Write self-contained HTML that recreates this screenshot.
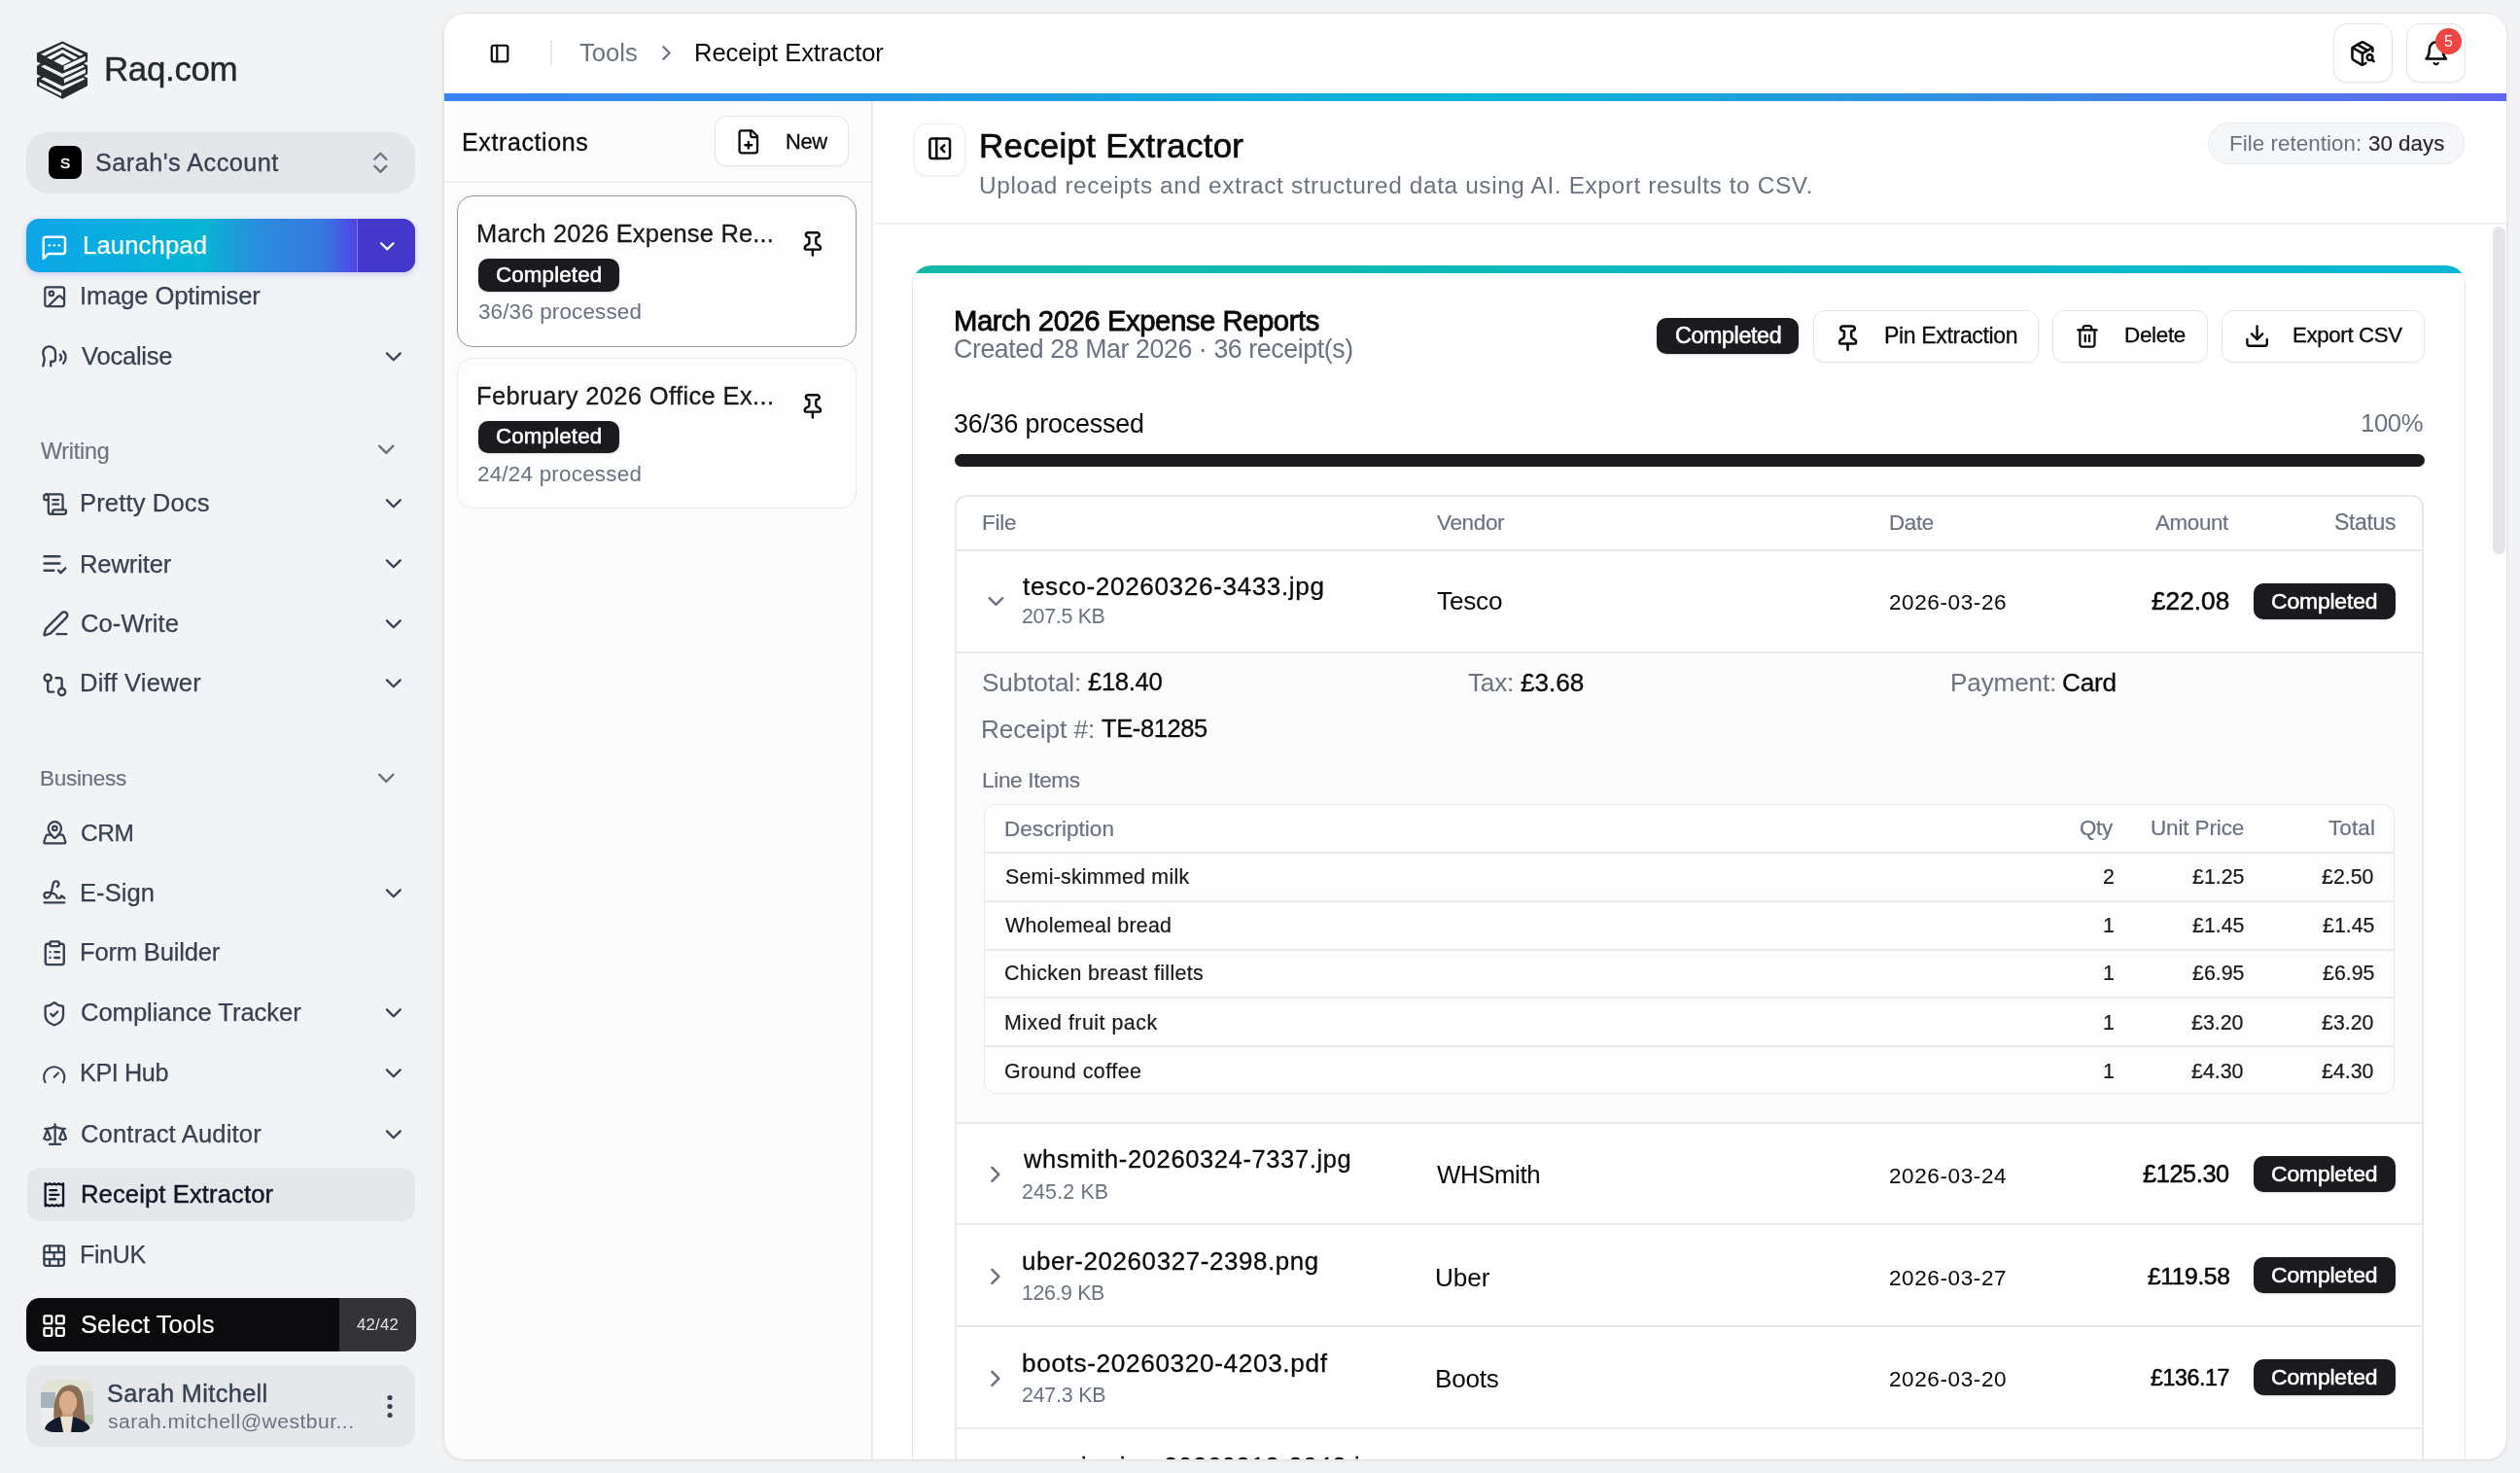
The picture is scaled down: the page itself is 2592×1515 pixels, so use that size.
<!DOCTYPE html><html><head><meta charset="utf-8"><style>
html,body{margin:0;padding:0;width:2592px;height:1515px;overflow:hidden;background:#f2f3f5;}
body{position:relative;font-family:"Liberation Sans",sans-serif;}
.t{position:absolute;white-space:nowrap;will-change:transform;}
</style></head><body>
<div style="position:absolute;left:27px;top:136px;width:400px;height:63px;background:#e4e6ea;border-radius:22px;box-sizing:border-box;z-index:1;"></div>
<div style="position:absolute;left:50px;top:150px;width:34px;height:34px;background:#000;border-radius:8px;box-sizing:border-box;z-index:3;"></div>
<div style="position:absolute;left:27px;top:225px;width:400px;height:55px;background:linear-gradient(90deg,#0ea5e9 0%,#06b6d4 45%,#2a8ddc 60%,#3778e0 76%,#4f46e5 85%,#4f46e5 100%);border-radius:13px;box-sizing:border-box;z-index:1;box-shadow:0 2px 6px rgba(79,70,229,0.25);"></div>
<div style="position:absolute;left:367px;top:225px;width:60px;height:55px;background:#4338ca;border-radius:0px;box-sizing:border-box;z-index:2;border-top-right-radius:13px;border-bottom-right-radius:13px;border-left:1px solid rgba(255,255,255,0.35);"></div>
<div style="position:absolute;left:27.8px;top:1201.3px;width:399.7px;height:54.5px;background:#e5e7eb;border-radius:14px;box-sizing:border-box;z-index:1;"></div>
<div style="position:absolute;left:27.3px;top:1334.6px;width:400.2px;height:55.80000000000018px;background:#0b0b0d;border-radius:14px;box-sizing:border-box;z-index:1;"></div>
<div style="position:absolute;left:349px;top:1334.6px;width:78.5px;height:55.80000000000018px;background:#333338;border-radius:0px;box-sizing:border-box;z-index:2;border-top-right-radius:14px;border-bottom-right-radius:14px;"></div>
<div style="position:absolute;left:27.3px;top:1404px;width:400.2px;height:83.5px;background:#e5e7eb;border-radius:16px;box-sizing:border-box;z-index:1;"></div>
<div style="position:absolute;left:456px;top:13px;width:2123px;height:1488.5px;background:#ffffff;border-radius:22px;box-sizing:border-box;z-index:0;box-shadow:0 1px 4px rgba(0,0,0,0.05);"></div>
<div style="position:absolute;left:565.5px;top:41px;width:2px;height:26px;background:#e5e7eb;z-index:4"></div>
<div style="position:absolute;left:2399.5px;top:24.3px;width:61.0px;height:60.7px;background:#fff;border:1.5px solid #e3e5e9;border-radius:14px;box-sizing:border-box;z-index:3;box-shadow:0 1px 2px rgba(0,0,0,0.05);"></div>
<div style="position:absolute;left:2475.4px;top:24.3px;width:60.59999999999991px;height:60.7px;background:#fff;border:1.5px solid #e3e5e9;border-radius:14px;box-sizing:border-box;z-index:3;box-shadow:0 1px 2px rgba(0,0,0,0.05);"></div>
<div style="position:absolute;left:2505px;top:29px;width:26.5px;height:26.5px;background:#ef4444;border-radius:14px;box-sizing:border-box;z-index:7;"></div>
<div style="position:absolute;left:456px;top:96px;width:2123px;height:7.5px;background:linear-gradient(90deg,#3b82f6 0%,#06b6d4 50%,#6366f1 100%);border-radius:0px;box-sizing:border-box;z-index:3;"></div>
<div style="position:absolute;left:457px;top:103.5px;width:439px;height:1397.0px;background:#fcfcfd;border-radius:0px;box-sizing:border-box;z-index:1;border-bottom-left-radius:20px;"></div>
<div style="position:absolute;left:895.5px;top:103.5px;width:2px;height:1397.0px;background:#e6e8ec;z-index:4"></div>
<div style="position:absolute;left:457px;top:186px;width:439px;height:2px;background:#eef0f2;z-index:4"></div>
<div style="position:absolute;left:735px;top:119px;width:138.29999999999995px;height:52.30000000000001px;background:#fff;border:1.5px solid #e3e5e9;border-radius:12px;box-sizing:border-box;z-index:3;box-shadow:0 1px 2px rgba(0,0,0,0.04);"></div>
<div style="position:absolute;left:470.2px;top:201.4px;width:411.00000000000006px;height:155.29999999999998px;background:#fdfdfd;border:1.8px solid #94969c;border-radius:16px;box-sizing:border-box;z-index:2;"></div>
<div style="position:absolute;left:492px;top:266.0px;width:145px;height:33.5px;background:#1b1b1f;border-radius:10px;box-sizing:border-box;z-index:3;box-shadow:0 1px 2px rgba(0,0,0,0.15);"></div>
<div style="position:absolute;left:470.2px;top:368.3px;width:411.00000000000006px;height:154.3px;background:#fdfdfd;border:1.5px solid #e9eaee;border-radius:16px;box-sizing:border-box;z-index:2;"></div>
<div style="position:absolute;left:492px;top:432.9px;width:145px;height:33.5px;background:#1b1b1f;border-radius:10px;box-sizing:border-box;z-index:3;box-shadow:0 1px 2px rgba(0,0,0,0.15);"></div>
<div style="position:absolute;left:939.5px;top:126.5px;width:53.0px;height:54.0px;background:#fff;border:1.5px solid #eceef1;border-radius:13px;box-sizing:border-box;z-index:3;box-shadow:0 1px 3px rgba(0,0,0,0.06);"></div>
<div style="position:absolute;left:2271.3px;top:126.4px;width:263.89999999999964px;height:42.599999999999994px;background:#f6f7f9;border:1.5px solid #e6e8ec;border-radius:22px;box-sizing:border-box;z-index:3;"></div>
<div style="position:absolute;left:896px;top:229px;width:1683px;height:2px;background:#f0f1f3;z-index:4"></div>
<div style="position:absolute;left:2564px;top:232.5px;width:12.5px;height:337.5px;background:#e3e5e9;border-radius:7px;box-sizing:border-box;z-index:4;"></div>
<div style="position:absolute;left:937.7px;top:272.8px;width:1598.5px;height:1300px;border-radius:20px;overflow:hidden;z-index:1"><div style="position:absolute;inset:0;border:1.5px solid #e3e5e9;border-radius:20px;background:#fff"></div><div style="position:absolute;left:0;top:0;right:0;height:7.8px;background:linear-gradient(90deg,#14b8a6,#06b6d4)"></div></div>
<div style="position:absolute;left:1704.3px;top:327px;width:146.20000000000005px;height:37px;background:#1b1b1f;border-radius:10px;box-sizing:border-box;z-index:3;box-shadow:0 1px 2px rgba(0,0,0,0.15);"></div>
<div style="position:absolute;left:1865px;top:318.5px;width:231.69999999999982px;height:54.5px;background:#fff;border:1.5px solid #e3e5e9;border-radius:12px;box-sizing:border-box;z-index:3;box-shadow:0 1px 2px rgba(0,0,0,0.04);"></div>
<div style="position:absolute;left:2111px;top:318.5px;width:159.5999999999999px;height:54.5px;background:#fff;border:1.5px solid #e3e5e9;border-radius:12px;box-sizing:border-box;z-index:3;box-shadow:0 1px 2px rgba(0,0,0,0.04);"></div>
<div style="position:absolute;left:2284.8px;top:318.5px;width:209.29999999999973px;height:54.5px;background:#fff;border:1.5px solid #e3e5e9;border-radius:12px;box-sizing:border-box;z-index:3;box-shadow:0 1px 2px rgba(0,0,0,0.04);"></div>
<div style="position:absolute;left:982px;top:467px;width:1512.1px;height:13px;background:#1b1b1f;border-radius:7px;box-sizing:border-box;z-index:3;"></div>
<div style="position:absolute;left:981.7px;top:509px;width:1511.3px;height:1051px;background:#fff;border:2px solid #e6e8ec;border-radius:12px;box-sizing:border-box;z-index:2;"></div>
<div style="position:absolute;left:982px;top:565px;width:1511px;height:2px;background:#e6e8ec;z-index:4"></div>
<div style="position:absolute;left:2318px;top:600px;width:146.19999999999982px;height:37px;background:#1b1b1f;border-radius:10px;box-sizing:border-box;z-index:3;box-shadow:0 1px 2px rgba(0,0,0,0.15);"></div>
<div style="position:absolute;left:982px;top:670px;width:1511px;height:2px;background:#e6e8ec;z-index:4"></div>
<div style="position:absolute;left:983.7px;top:672px;width:1507.3px;height:481.5999999999999px;background:#fbfbfb;border-radius:0px;box-sizing:border-box;z-index:3;"></div>
<div style="position:absolute;left:1011.6px;top:827px;width:1451.6px;height:297.70000000000005px;background:#fdfdfd;border:1.5px solid #e6e8ec;border-radius:12px;box-sizing:border-box;z-index:3;"></div>
<div style="position:absolute;left:1012px;top:875.5px;width:1450px;height:2px;background:#e6e8ec;z-index:4"></div>
<div style="position:absolute;left:1012px;top:925.5px;width:1450px;height:2px;background:#eaebef;z-index:4"></div>
<div style="position:absolute;left:1012px;top:976px;width:1450px;height:2px;background:#eaebef;z-index:4"></div>
<div style="position:absolute;left:1012px;top:1025.4px;width:1450px;height:2px;background:#eaebef;z-index:4"></div>
<div style="position:absolute;left:1012px;top:1075.2px;width:1450px;height:2px;background:#eaebef;z-index:4"></div>
<div style="position:absolute;left:982px;top:1153.6px;width:1511px;height:2px;background:#e6e8ec;z-index:4"></div>
<div style="position:absolute;left:2318px;top:1188.6px;width:146.19999999999982px;height:37.0px;background:#1b1b1f;border-radius:10px;box-sizing:border-box;z-index:3;box-shadow:0 1px 2px rgba(0,0,0,0.15);"></div>
<div style="position:absolute;left:982px;top:1258.4px;width:1511px;height:2px;background:#e6e8ec;z-index:4"></div>
<div style="position:absolute;left:2318px;top:1293.4px;width:146.19999999999982px;height:37.0px;background:#1b1b1f;border-radius:10px;box-sizing:border-box;z-index:3;box-shadow:0 1px 2px rgba(0,0,0,0.15);"></div>
<div style="position:absolute;left:982px;top:1362.9px;width:1511px;height:2px;background:#e6e8ec;z-index:4"></div>
<div style="position:absolute;left:2318px;top:1397.9px;width:146.19999999999982px;height:37.0px;background:#1b1b1f;border-radius:10px;box-sizing:border-box;z-index:3;box-shadow:0 1px 2px rgba(0,0,0,0.15);"></div>
<div style="position:absolute;left:982px;top:1467.7px;width:1511px;height:2px;background:#e6e8ec;z-index:4"></div>
<div style="position:absolute;left:456px;top:1501.5px;width:2136px;height:13.5px;background:#f2f3f5;border-radius:0px;box-sizing:border-box;z-index:20;"></div>
<div style="position:absolute;left:2579px;top:0px;width:13px;height:1515px;background:#f2f3f5;border-radius:0px;box-sizing:border-box;z-index:20;"></div>
<div style="position:absolute;left:455.5px;top:12.5px;width:2123.5px;height:1489.5px;background:transparent;border:1px solid #e2e4e8;border-radius:22px;box-sizing:border-box;z-index:21;box-shadow:0 1px 3px rgba(0,0,0,0.06);"></div>
<div class="t" id="t0" style="left:107.20px;top:53.52px;font-size:34.88px;line-height:34.88px;color:#25292c;font-weight:400;letter-spacing:-0.317px;z-index:5;-webkit-text-stroke:0.4px #25292c;">Raq.com</div>
<div class="t" id="t1" style="left:62.00px;top:160.10px;font-size:15.26px;line-height:15.26px;color:#fff;font-weight:400;letter-spacing:0.000px;z-index:6;-webkit-text-stroke:0.4px #fff;">S</div>
<div class="t" id="t2" style="left:98.15px;top:154.63px;font-size:25.29px;line-height:25.29px;color:#374151;font-weight:400;letter-spacing:0.459px;z-index:5;-webkit-text-stroke:0.3px #374151;">Sarah&#39;s Account</div>
<div class="t" id="t3" style="left:85.42px;top:240.18px;font-size:25.58px;line-height:25.58px;color:#fff;font-weight:400;letter-spacing:0.173px;z-index:5;-webkit-text-stroke:0.25px #fff;">Launchpad</div>
<div class="t" id="t4" style="left:82.42px;top:292.38px;font-size:25.58px;line-height:25.58px;color:#374151;font-weight:400;letter-spacing:-0.126px;z-index:5;-webkit-text-stroke:0.25px #374151;">Image Optimiser</div>
<div class="t" id="t5" style="left:84.42px;top:354.18px;font-size:25.58px;line-height:25.58px;color:#374151;font-weight:400;letter-spacing:-0.242px;z-index:5;-webkit-text-stroke:0.25px #374151;">Vocalise</div>
<div class="t" id="t6" style="left:42.10px;top:453.35px;font-size:23.26px;line-height:23.26px;color:#6b7280;font-weight:400;letter-spacing:-0.198px;z-index:5;-webkit-text-stroke:0.2px #6b7280;">Writing</div>
<div class="t" id="t7" style="left:82.42px;top:504.68px;font-size:25.58px;line-height:25.58px;color:#374151;font-weight:400;letter-spacing:0.135px;z-index:5;-webkit-text-stroke:0.25px #374151;">Pretty Docs</div>
<div class="t" id="t8" style="left:82.42px;top:567.58px;font-size:25.58px;line-height:25.58px;color:#374151;font-weight:400;letter-spacing:-0.136px;z-index:5;-webkit-text-stroke:0.25px #374151;">Rewriter</div>
<div class="t" id="t9" style="left:83.42px;top:629.38px;font-size:25.58px;line-height:25.58px;color:#374151;font-weight:400;letter-spacing:0.064px;z-index:5;-webkit-text-stroke:0.25px #374151;">Co-Write</div>
<div class="t" id="t10" style="left:82.42px;top:690.38px;font-size:25.58px;line-height:25.58px;color:#374151;font-weight:400;letter-spacing:0.204px;z-index:5;-webkit-text-stroke:0.25px #374151;">Diff Viewer</div>
<div class="t" id="t11" style="left:41.13px;top:789.87px;font-size:22.64px;line-height:22.64px;color:#6b7280;font-weight:400;letter-spacing:-0.349px;z-index:5;-webkit-text-stroke:0.2px #6b7280;">Business</div>
<div class="t" id="t12" style="left:83.47px;top:844.82px;font-size:24.47px;line-height:24.47px;color:#374151;font-weight:400;letter-spacing:-0.384px;z-index:5;-webkit-text-stroke:0.25px #374151;">CRM</div>
<div class="t" id="t13" style="left:82.42px;top:905.78px;font-size:25.58px;line-height:25.58px;color:#374151;font-weight:400;letter-spacing:0.041px;z-index:5;-webkit-text-stroke:0.25px #374151;">E-Sign</div>
<div class="t" id="t14" style="left:82.42px;top:966.88px;font-size:25.58px;line-height:25.58px;color:#374151;font-weight:400;letter-spacing:-0.194px;z-index:5;-webkit-text-stroke:0.25px #374151;">Form Builder</div>
<div class="t" id="t15" style="left:83.42px;top:1029.38px;font-size:25.58px;line-height:25.58px;color:#374151;font-weight:400;letter-spacing:-0.037px;z-index:5;-webkit-text-stroke:0.25px #374151;">Compliance Tracker</div>
<div class="t" id="t16" style="left:82.45px;top:1091.30px;font-size:25.20px;line-height:25.20px;color:#374151;font-weight:400;letter-spacing:-0.384px;z-index:5;-webkit-text-stroke:0.25px #374151;">KPI Hub</div>
<div class="t" id="t17" style="left:83.42px;top:1154.18px;font-size:25.58px;line-height:25.58px;color:#374151;font-weight:400;letter-spacing:0.150px;z-index:5;-webkit-text-stroke:0.25px #374151;">Contract Auditor</div>
<div class="t" id="t18" style="left:82.52px;top:1215.58px;font-size:25.58px;line-height:25.58px;color:#111827;font-weight:400;letter-spacing:0.119px;z-index:5;-webkit-text-stroke:0.45px #111827;">Receipt Extractor</div>
<div class="t" id="t19" style="left:82.46px;top:1278.00px;font-size:25.09px;line-height:25.09px;color:#374151;font-weight:400;letter-spacing:-0.384px;z-index:5;-webkit-text-stroke:0.25px #374151;">FinUK</div>
<div class="t" id="t20" style="left:83.40px;top:1349.58px;font-size:25.58px;line-height:25.58px;color:#fff;font-weight:400;letter-spacing:-0.002px;z-index:5;-webkit-text-stroke:0.2px #fff;">Select Tools</div>
<div class="t" id="t21" style="left:366.80px;top:1354.88px;font-size:16.72px;line-height:16.72px;color:#e4e4e7;font-weight:400;letter-spacing:0.273px;z-index:5;">42/42</div>
<div class="t" id="t22" style="left:110.20px;top:1420.63px;font-size:25.29px;line-height:25.29px;color:#374151;font-weight:400;letter-spacing:0.387px;z-index:5;-webkit-text-stroke:0.4px #374151;">Sarah Mitchell</div>
<div class="t" id="t23" style="left:111.00px;top:1450.69px;font-size:21.08px;line-height:21.08px;color:#6b7280;font-weight:400;letter-spacing:0.475px;z-index:5;">sarah.mitchell@westbur...</div>
<div class="t" id="t24" style="left:596.00px;top:42.38px;font-size:25.58px;line-height:25.58px;color:#6b7280;font-weight:400;letter-spacing:0.019px;z-index:5;">Tools</div>
<div class="t" id="t25" style="left:714.20px;top:42.38px;font-size:25.58px;line-height:25.58px;color:#0a0a0a;font-weight:400;letter-spacing:-0.085px;z-index:5;">Receipt Extractor</div>
<div class="t" id="t26" style="left:2514.00px;top:34.79px;font-size:15.99px;line-height:15.99px;color:#fff;font-weight:400;letter-spacing:0.000px;z-index:8;">5</div>
<div class="t" id="t27" style="left:475.43px;top:133.57px;font-size:25.01px;line-height:25.01px;color:#0a0a0a;font-weight:400;letter-spacing:0.618px;z-index:5;-webkit-text-stroke:0.3px #0a0a0a;">Extractions</div>
<div class="t" id="t28" style="left:808.21px;top:135.18px;font-size:21.92px;line-height:21.92px;color:#0a0a0a;font-weight:400;letter-spacing:-0.349px;z-index:5;-webkit-text-stroke:0.3px #0a0a0a;">New</div>
<div class="t" id="t29" style="left:489.75px;top:227.71px;font-size:25.44px;line-height:25.44px;color:#18181b;font-weight:400;letter-spacing:0.207px;z-index:5;-webkit-text-stroke:0.3px #18181b;">March 2026 Expense Re...</div>
<div class="t" id="t30" style="left:510.12px;top:271.54px;font-size:22.38px;line-height:22.38px;color:#fff;font-weight:400;letter-spacing:0.124px;z-index:5;-webkit-text-stroke:0.55px #fff;">Completed</div>
<div class="t" id="t31" style="left:491.60px;top:310.09px;font-size:22.38px;line-height:22.38px;color:#6b7280;font-weight:400;letter-spacing:0.172px;z-index:5;">36/36 processed</div>
<div class="t" id="t32" style="left:489.75px;top:394.61px;font-size:25.44px;line-height:25.44px;color:#18181b;font-weight:400;letter-spacing:0.380px;z-index:5;-webkit-text-stroke:0.3px #18181b;">February 2026 Office Ex...</div>
<div class="t" id="t33" style="left:510.12px;top:438.44px;font-size:22.38px;line-height:22.38px;color:#fff;font-weight:400;letter-spacing:0.124px;z-index:5;-webkit-text-stroke:0.55px #fff;">Completed</div>
<div class="t" id="t34" style="left:490.60px;top:476.99px;font-size:22.38px;line-height:22.38px;color:#6b7280;font-weight:400;letter-spacing:0.243px;z-index:5;">24/24 processed</div>
<div class="t" id="t35" style="left:1007.25px;top:132.52px;font-size:34.88px;line-height:34.88px;color:#0a0a0a;font-weight:400;letter-spacing:0.278px;z-index:5;-webkit-text-stroke:0.7px #0a0a0a;">Receipt Extractor</div>
<div class="t" id="t36" style="left:1006.98px;top:178.76px;font-size:24.43px;line-height:24.43px;color:#6b7280;font-weight:400;letter-spacing:0.600px;z-index:5;">Upload receipts and extract structured data using AI. Export results to CSV.</div>
<div class="t" id="t37" style="left:2292.70px;top:136.89px;font-size:22.38px;line-height:22.38px;color:#6b7280;font-weight:400;letter-spacing:0.047px;z-index:5;">File retention:</div>
<div class="t" id="t38" style="left:2436.07px;top:136.89px;font-size:22.38px;line-height:22.38px;color:#27272a;font-weight:400;letter-spacing:-0.005px;z-index:5;-webkit-text-stroke:0.15px #27272a;">30 days</div>
<div class="t" id="t39" style="left:980.50px;top:314.53px;font-size:29.32px;line-height:29.32px;color:#0a0a0a;font-weight:400;letter-spacing:-0.458px;z-index:5;-webkit-text-stroke:0.85px #0a0a0a;">March 2026 Expense Reports</div>
<div class="t" id="t40" style="left:981.01px;top:346.41px;font-size:26.73px;line-height:26.73px;color:#6b7280;font-weight:400;letter-spacing:-0.403px;z-index:5;">Created 28 Mar 2026 &middot; 36 receipt(s)</div>
<div class="t" id="t41" style="left:1722.58px;top:333.86px;font-size:23.24px;line-height:23.24px;color:#fff;font-weight:400;letter-spacing:-0.349px;z-index:5;-webkit-text-stroke:0.55px #fff;">Completed</div>
<div class="t" id="t42" style="left:1938.16px;top:333.83px;font-size:23.05px;line-height:23.05px;color:#0a0a0a;font-weight:400;letter-spacing:-0.349px;z-index:5;-webkit-text-stroke:0.3px #0a0a0a;">Pin Extraction</div>
<div class="t" id="t43" style="left:2184.88px;top:334.29px;font-size:22.50px;line-height:22.50px;color:#0a0a0a;font-weight:400;letter-spacing:-0.349px;z-index:5;-webkit-text-stroke:0.3px #0a0a0a;">Delete</div>
<div class="t" id="t44" style="left:2357.59px;top:334.48px;font-size:22.27px;line-height:22.27px;color:#0a0a0a;font-weight:400;letter-spacing:-0.349px;z-index:5;-webkit-text-stroke:0.3px #0a0a0a;">Export CSV</div>
<div class="t" id="t45" style="left:981.00px;top:423.48px;font-size:26.89px;line-height:26.89px;color:#0a0a0a;font-weight:400;letter-spacing:-0.198px;z-index:5;">36/36 processed</div>
<div class="t" id="t46" style="left:2428.29px;top:423.19px;font-size:25.69px;line-height:25.69px;color:#6b7280;font-weight:400;letter-spacing:-0.403px;z-index:5;">100%</div>
<div class="t" id="t47" style="left:1010.12px;top:526.44px;font-size:22.68px;line-height:22.68px;color:#6b7280;font-weight:400;letter-spacing:-0.349px;z-index:5;-webkit-text-stroke:0.2px #6b7280;">File</div>
<div class="t" id="t48" style="left:1477.70px;top:526.59px;font-size:22.50px;line-height:22.50px;color:#6b7280;font-weight:400;letter-spacing:-0.349px;z-index:5;-webkit-text-stroke:0.2px #6b7280;">Vendor</div>
<div class="t" id="t49" style="left:1943.04px;top:526.67px;font-size:22.40px;line-height:22.40px;color:#6b7280;font-weight:400;letter-spacing:-0.349px;z-index:5;-webkit-text-stroke:0.2px #6b7280;">Date</div>
<div class="t" id="t50" style="left:2217.30px;top:526.71px;font-size:22.36px;line-height:22.36px;color:#6b7280;font-weight:400;letter-spacing:-0.349px;z-index:5;-webkit-text-stroke:0.2px #6b7280;">Amount</div>
<div class="t" id="t51" style="left:2401.11px;top:526.12px;font-size:23.06px;line-height:23.06px;color:#6b7280;font-weight:400;letter-spacing:-0.349px;z-index:5;-webkit-text-stroke:0.2px #6b7280;">Status</div>
<div class="t" id="t52" style="left:1052.45px;top:589.94px;font-size:26.10px;line-height:26.10px;color:#0a0a0a;font-weight:400;letter-spacing:0.636px;z-index:5;-webkit-text-stroke:0.3px #0a0a0a;">tesco-20260326-3433.jpg</div>
<div class="t" id="t53" style="left:1051.30px;top:623.95px;font-size:21.37px;line-height:21.37px;color:#6b7280;font-weight:400;letter-spacing:-0.290px;z-index:5;">207.5 KB</div>
<div class="t" id="t54" style="left:1477.60px;top:604.89px;font-size:26.16px;line-height:26.16px;color:#0a0a0a;font-weight:400;letter-spacing:-0.195px;z-index:5;">Tesco</div>
<div class="t" id="t55" style="left:1942.90px;top:608.92px;font-size:22.58px;line-height:22.58px;color:#0a0a0a;font-weight:400;letter-spacing:0.563px;z-index:5;">2026-03-26</div>
<div class="t" id="t56" style="left:2213.28px;top:604.89px;font-size:26.16px;line-height:26.16px;color:#0a0a0a;font-weight:400;letter-spacing:0.039px;z-index:5;-webkit-text-stroke:0.55px #0a0a0a;">&pound;22.08</div>
<div class="t" id="t57" style="left:2336.28px;top:606.99px;font-size:22.97px;line-height:22.97px;color:#fff;font-weight:400;letter-spacing:-0.200px;z-index:5;-webkit-text-stroke:0.55px #fff;">Completed</div>
<div class="t" id="t58" style="left:1010.00px;top:688.79px;font-size:26.16px;line-height:26.16px;color:#6b7280;font-weight:400;letter-spacing:-0.122px;z-index:5;">Subtotal:</div>
<div class="t" id="t59" style="left:1119.15px;top:689.15px;font-size:25.74px;line-height:25.74px;color:#0a0a0a;font-weight:400;letter-spacing:-0.392px;z-index:5;-webkit-text-stroke:0.3px #0a0a0a;">&pound;18.40</div>
<div class="t" id="t60" style="left:1510.00px;top:688.79px;font-size:26.16px;line-height:26.16px;color:#6b7280;font-weight:400;letter-spacing:-0.234px;z-index:5;">Tax:</div>
<div class="t" id="t61" style="left:1564.15px;top:688.79px;font-size:26.16px;line-height:26.16px;color:#0a0a0a;font-weight:400;letter-spacing:-0.052px;z-index:5;-webkit-text-stroke:0.3px #0a0a0a;">&pound;3.68</div>
<div class="t" id="t62" style="left:2006.30px;top:688.79px;font-size:26.16px;line-height:26.16px;color:#6b7280;font-weight:400;letter-spacing:-0.174px;z-index:5;">Payment:</div>
<div class="t" id="t63" style="left:2120.65px;top:688.79px;font-size:26.16px;line-height:26.16px;color:#0a0a0a;font-weight:400;letter-spacing:-0.215px;z-index:5;-webkit-text-stroke:0.3px #0a0a0a;">Card</div>
<div class="t" id="t64" style="left:1009.00px;top:736.59px;font-size:26.16px;line-height:26.16px;color:#6b7280;font-weight:400;letter-spacing:-0.056px;z-index:5;">Receipt #:</div>
<div class="t" id="t65" style="left:1133.15px;top:737.15px;font-size:25.51px;line-height:25.51px;color:#0a0a0a;font-weight:400;letter-spacing:-0.392px;z-index:5;-webkit-text-stroke:0.3px #0a0a0a;">TE-81285</div>
<div class="t" id="t66" style="left:1010.13px;top:791.69px;font-size:22.62px;line-height:22.62px;color:#6b7280;font-weight:400;letter-spacing:-0.349px;z-index:5;-webkit-text-stroke:0.2px #6b7280;">Line Items</div>
<div class="t" id="t67" style="left:1032.50px;top:841.96px;font-size:22.53px;line-height:22.53px;color:#6b7280;font-weight:400;letter-spacing:0.030px;z-index:5;-webkit-text-stroke:0.2px #6b7280;">Description</div>
<div class="t" id="t68" style="left:2139.41px;top:841.32px;font-size:22.34px;line-height:22.34px;color:#6b7280;font-weight:400;letter-spacing:-0.338px;z-index:5;-webkit-text-stroke:0.2px #6b7280;">Qty</div>
<div class="t" id="t69" style="left:2212.10px;top:841.16px;font-size:22.53px;line-height:22.53px;color:#6b7280;font-weight:400;letter-spacing:-0.141px;z-index:5;-webkit-text-stroke:0.2px #6b7280;">Unit Price</div>
<div class="t" id="t70" style="left:2394.60px;top:841.16px;font-size:22.53px;line-height:22.53px;color:#6b7280;font-weight:400;letter-spacing:0.111px;z-index:5;-webkit-text-stroke:0.2px #6b7280;">Total</div>
<div class="t" id="t71" style="left:1033.50px;top:892.25px;font-size:21.37px;line-height:21.37px;color:#18181b;font-weight:400;letter-spacing:0.247px;z-index:5;-webkit-text-stroke:0.2px #18181b;">Semi-skimmed milk</div>
<div class="t" id="t72" style="left:2163.20px;top:892.25px;font-size:21.37px;line-height:21.37px;color:#18181b;font-weight:400;letter-spacing:0.000px;z-index:5;-webkit-text-stroke:0.2px #18181b;">2</div>
<div class="t" id="t73" style="left:2255.33px;top:892.25px;font-size:21.37px;line-height:21.37px;color:#18181b;font-weight:400;letter-spacing:0.000px;z-index:5;-webkit-text-stroke:0.2px #18181b;">&pound;1.25</div>
<div class="t" id="t74" style="left:2388.03px;top:892.25px;font-size:21.37px;line-height:21.37px;color:#18181b;font-weight:400;letter-spacing:0.000px;z-index:5;-webkit-text-stroke:0.2px #18181b;">&pound;2.50</div>
<div class="t" id="t75" style="left:1033.50px;top:941.95px;font-size:21.37px;line-height:21.37px;color:#18181b;font-weight:400;letter-spacing:0.255px;z-index:5;-webkit-text-stroke:0.2px #18181b;">Wholemeal bread</div>
<div class="t" id="t76" style="left:2163.20px;top:941.95px;font-size:21.37px;line-height:21.37px;color:#18181b;font-weight:400;letter-spacing:0.000px;z-index:5;-webkit-text-stroke:0.2px #18181b;">1</div>
<div class="t" id="t77" style="left:2255.33px;top:941.95px;font-size:21.37px;line-height:21.37px;color:#18181b;font-weight:400;letter-spacing:0.000px;z-index:5;-webkit-text-stroke:0.2px #18181b;">&pound;1.45</div>
<div class="t" id="t78" style="left:2389.03px;top:941.95px;font-size:21.37px;line-height:21.37px;color:#18181b;font-weight:400;letter-spacing:0.000px;z-index:5;-webkit-text-stroke:0.2px #18181b;">&pound;1.45</div>
<div class="t" id="t79" style="left:1032.50px;top:991.45px;font-size:21.37px;line-height:21.37px;color:#18181b;font-weight:400;letter-spacing:0.367px;z-index:5;-webkit-text-stroke:0.2px #18181b;">Chicken breast fillets</div>
<div class="t" id="t80" style="left:2163.20px;top:991.45px;font-size:21.37px;line-height:21.37px;color:#18181b;font-weight:400;letter-spacing:0.000px;z-index:5;-webkit-text-stroke:0.2px #18181b;">1</div>
<div class="t" id="t81" style="left:2255.33px;top:991.45px;font-size:21.37px;line-height:21.37px;color:#18181b;font-weight:400;letter-spacing:0.000px;z-index:5;-webkit-text-stroke:0.2px #18181b;">&pound;6.95</div>
<div class="t" id="t82" style="left:2389.03px;top:991.45px;font-size:21.37px;line-height:21.37px;color:#18181b;font-weight:400;letter-spacing:0.000px;z-index:5;-webkit-text-stroke:0.2px #18181b;">&pound;6.95</div>
<div class="t" id="t83" style="left:1032.50px;top:1041.95px;font-size:21.37px;line-height:21.37px;color:#18181b;font-weight:400;letter-spacing:0.501px;z-index:5;-webkit-text-stroke:0.2px #18181b;">Mixed fruit pack</div>
<div class="t" id="t84" style="left:2163.20px;top:1041.95px;font-size:21.37px;line-height:21.37px;color:#18181b;font-weight:400;letter-spacing:0.000px;z-index:5;-webkit-text-stroke:0.2px #18181b;">1</div>
<div class="t" id="t85" style="left:2254.33px;top:1041.95px;font-size:21.37px;line-height:21.37px;color:#18181b;font-weight:400;letter-spacing:0.000px;z-index:5;-webkit-text-stroke:0.2px #18181b;">&pound;3.20</div>
<div class="t" id="t86" style="left:2388.03px;top:1041.95px;font-size:21.37px;line-height:21.37px;color:#18181b;font-weight:400;letter-spacing:0.000px;z-index:5;-webkit-text-stroke:0.2px #18181b;">&pound;3.20</div>
<div class="t" id="t87" style="left:1032.50px;top:1092.35px;font-size:21.37px;line-height:21.37px;color:#18181b;font-weight:400;letter-spacing:0.500px;z-index:5;-webkit-text-stroke:0.2px #18181b;">Ground coffee</div>
<div class="t" id="t88" style="left:2163.20px;top:1092.35px;font-size:21.37px;line-height:21.37px;color:#18181b;font-weight:400;letter-spacing:0.000px;z-index:5;-webkit-text-stroke:0.2px #18181b;">1</div>
<div class="t" id="t89" style="left:2254.33px;top:1092.35px;font-size:21.37px;line-height:21.37px;color:#18181b;font-weight:400;letter-spacing:0.000px;z-index:5;-webkit-text-stroke:0.2px #18181b;">&pound;4.30</div>
<div class="t" id="t90" style="left:2388.03px;top:1092.35px;font-size:21.37px;line-height:21.37px;color:#18181b;font-weight:400;letter-spacing:0.000px;z-index:5;-webkit-text-stroke:0.2px #18181b;">&pound;4.30</div>
<div class="t" id="t91" style="left:1053.45px;top:1180.08px;font-size:25.47px;line-height:25.47px;color:#0a0a0a;font-weight:400;letter-spacing:0.636px;z-index:5;-webkit-text-stroke:0.3px #0a0a0a;">whsmith-20260324-7337.jpg</div>
<div class="t" id="t92" style="left:1051.30px;top:1215.55px;font-size:21.37px;line-height:21.37px;color:#6b7280;font-weight:400;letter-spacing:0.167px;z-index:5;">245.2 KB</div>
<div class="t" id="t93" style="left:1477.60px;top:1196.40px;font-size:25.79px;line-height:25.79px;color:#0a0a0a;font-weight:400;letter-spacing:-0.392px;z-index:5;">WHSmith</div>
<div class="t" id="t94" style="left:1942.90px;top:1198.72px;font-size:22.58px;line-height:22.58px;color:#0a0a0a;font-weight:400;letter-spacing:0.563px;z-index:5;">2026-03-24</div>
<div class="t" id="t95" style="left:2204.28px;top:1195.40px;font-size:25.33px;line-height:25.33px;color:#0a0a0a;font-weight:400;letter-spacing:-0.392px;z-index:5;-webkit-text-stroke:0.55px #0a0a0a;">&pound;125.30</div>
<div class="t" id="t96" style="left:2336.28px;top:1195.59px;font-size:22.97px;line-height:22.97px;color:#fff;font-weight:400;letter-spacing:-0.200px;z-index:5;-webkit-text-stroke:0.55px #fff;">Completed</div>
<div class="t" id="t97" style="left:1051.43px;top:1284.55px;font-size:25.86px;line-height:25.86px;color:#0a0a0a;font-weight:400;letter-spacing:0.636px;z-index:5;-webkit-text-stroke:0.3px #0a0a0a;">uber-20260327-2398.png</div>
<div class="t" id="t98" style="left:1051.30px;top:1320.43px;font-size:21.27px;line-height:21.27px;color:#6b7280;font-weight:400;letter-spacing:-0.320px;z-index:5;">126.9 KB</div>
<div class="t" id="t99" style="left:1475.60px;top:1300.89px;font-size:26.16px;line-height:26.16px;color:#0a0a0a;font-weight:400;letter-spacing:-0.094px;z-index:5;">Uber</div>
<div class="t" id="t100" style="left:1942.90px;top:1303.52px;font-size:22.58px;line-height:22.58px;color:#0a0a0a;font-weight:400;letter-spacing:0.563px;z-index:5;">2026-03-27</div>
<div class="t" id="t101" style="left:2208.57px;top:1300.78px;font-size:24.64px;line-height:24.64px;color:#0a0a0a;font-weight:400;letter-spacing:-0.392px;z-index:5;-webkit-text-stroke:0.55px #0a0a0a;">&pound;119.58</div>
<div class="t" id="t102" style="left:2336.28px;top:1300.39px;font-size:22.97px;line-height:22.97px;color:#fff;font-weight:400;letter-spacing:-0.200px;z-index:5;-webkit-text-stroke:0.55px #fff;">Completed</div>
<div class="t" id="t103" style="left:1051.42px;top:1388.77px;font-size:26.19px;line-height:26.19px;color:#0a0a0a;font-weight:400;letter-spacing:0.636px;z-index:5;-webkit-text-stroke:0.3px #0a0a0a;">boots-20260320-4203.pdf</div>
<div class="t" id="t104" style="left:1051.30px;top:1424.85px;font-size:21.37px;line-height:21.37px;color:#6b7280;font-weight:400;letter-spacing:-0.204px;z-index:5;">247.3 KB</div>
<div class="t" id="t105" style="left:1475.60px;top:1405.39px;font-size:26.16px;line-height:26.16px;color:#0a0a0a;font-weight:400;letter-spacing:-0.252px;z-index:5;">Boots</div>
<div class="t" id="t106" style="left:1942.90px;top:1408.02px;font-size:22.58px;line-height:22.58px;color:#0a0a0a;font-weight:400;letter-spacing:0.563px;z-index:5;">2026-03-20</div>
<div class="t" id="t107" style="left:2211.88px;top:1406.48px;font-size:23.21px;line-height:23.21px;color:#0a0a0a;font-weight:400;letter-spacing:-0.392px;z-index:5;-webkit-text-stroke:0.55px #0a0a0a;">&pound;136.17</div>
<div class="t" id="t108" style="left:2336.28px;top:1404.89px;font-size:22.97px;line-height:22.97px;color:#fff;font-weight:400;letter-spacing:-0.200px;z-index:5;-webkit-text-stroke:0.55px #fff;">Completed</div>
<div class="t" id="t109" style="left:1051.45px;top:1495.51px;font-size:25.44px;line-height:25.44px;color:#0a0a0a;font-weight:400;letter-spacing:0.750px;z-index:5;-webkit-text-stroke:0.3px #0a0a0a;">premier-inn-20260318-3942.jpg</div>
<svg style="position:absolute;left:34px;top:38px;width:60px;height:68px;z-index:6" viewBox="0 0 1300 1473">
<polygon fill="#272b2e" points="655,95 1215,360 1215,545 1130,590 1215,640 1215,825 1130,870 1215,920 1215,1090 655,1380 85,1090 85,920 170,875 85,830 85,645 170,595 85,545 85,360"/>
<g fill="#f2f3f5">
<polygon points="175,385 655,145 1125,385 1045,425 655,230 255,425"/>
<polygon points="305,460 655,280 1000,460 910,505 655,360 400,505"/>
<polygon points="655,430 850,535 655,635 460,535"/>
<polygon points="685,645 1165,430 1165,515 685,745"/>
<polygon points="175,660 255,625 655,820 1120,625 1150,665 655,905"/>
<polygon points="690,935 1170,715 1170,800 690,1030"/>
<polygon points="175,935 255,900 655,1100 1120,905 1150,940 655,1185"/>
<polygon points="135,1000 630,1245 630,1320 135,1070"/>
</g></svg>
<svg style="position:absolute;left:376.83px;top:152.92px;width:28.67px;height:28.67px;z-index:6" viewBox="0 0 24 24" fill="none" stroke="#6b7280" stroke-width="2" stroke-linecap="round" stroke-linejoin="round"><path d="m7 15 5 5 5-5"/><path d="m7 9 5-5 5 5"/></svg>
<svg style="position:absolute;left:40.52px;top:239.53px;width:29.70px;height:29.70px;z-index:6" viewBox="0 0 24 24" fill="none" stroke="#fff" stroke-width="2" stroke-linecap="round" stroke-linejoin="round"><path d="M21 15a2 2 0 0 1-2 2H7l-4 4V5a2 2 0 0 1 2-2h14a2 2 0 0 1 2 2z"/><path d="M8 10h.01"/><path d="M12 10h.01"/><path d="M16 10h.01"/></svg>
<svg style="position:absolute;left:386.47px;top:241.39px;width:24.64px;height:24.64px;z-index:6" viewBox="0 0 24 24" fill="none" stroke="#fff" stroke-width="2.2" stroke-linecap="round" stroke-linejoin="round"><path d="m6 9 6 6 6-6"/></svg>
<svg style="position:absolute;left:42.80px;top:291.80px;width:26.40px;height:26.40px;z-index:6" viewBox="0 0 24 24" fill="none" stroke="#374151" stroke-width="2" stroke-linecap="round" stroke-linejoin="round"><rect width="18" height="18" x="3" y="3" rx="2" ry="2"/><circle cx="9" cy="9" r="2"/><path d="m21 15-3.086-3.086a2 2 0 0 0-2.828 0L6 21"/></svg>
<svg style="position:absolute;left:42.23px;top:353.37px;width:28.00px;height:28.00px;z-index:6" viewBox="0 0 24 24" fill="none" stroke="#374151" stroke-width="2" stroke-linecap="round" stroke-linejoin="round"><path d="M8.8 20v-4.1l1.9.2a2.3 2.3 0 0 0 2.164-2.1V8.3A5.37 5.37 0 0 0 2 8.25c0 2.8.656 3.054 1 4.55a5.77 5.77 0 0 1 .029 2.758L2 20"/><path d="M19.8 17.8a7.5 7.5 0 0 0 .003-10.603"/><path d="M17 15a3.5 3.5 0 0 0-.025-4.975"/></svg>
<svg style="position:absolute;left:390.64px;top:353.09px;width:27.64px;height:27.64px;z-index:6" viewBox="0 0 24 24" fill="none" stroke="#374151" stroke-width="2" stroke-linecap="round" stroke-linejoin="round"><path d="m6 9 6 6 6-6"/></svg>
<svg style="position:absolute;left:382.85px;top:448.49px;width:28.54px;height:28.54px;z-index:6" viewBox="0 0 24 24" fill="none" stroke="#6b7280" stroke-width="2" stroke-linecap="round" stroke-linejoin="round"><path d="m6 9 6 6 6-6"/></svg>
<svg style="position:absolute;left:42.86px;top:504.73px;width:27.27px;height:27.27px;z-index:6" viewBox="0 0 24 24" fill="none" stroke="#374151" stroke-width="2" stroke-linecap="round" stroke-linejoin="round"><path d="M15 12h-5"/><path d="M15 8h-5"/><path d="M19 17V5a2 2 0 0 0-2-2H4"/><path d="M8 21h12a2 2 0 0 0 2-2v-1a1 1 0 0 0-1-1H11a1 1 0 0 0-1 1v1a2 2 0 1 1-4 0V5a2 2 0 1 0-4 0v2a1 1 0 0 0 1 1h3"/></svg>
<svg style="position:absolute;left:390.64px;top:503.59px;width:27.64px;height:27.64px;z-index:6" viewBox="0 0 24 24" fill="none" stroke="#374151" stroke-width="2" stroke-linecap="round" stroke-linejoin="round"><path d="m6 9 6 6 6-6"/></svg>
<svg style="position:absolute;left:41.59px;top:564.97px;width:28.95px;height:28.95px;z-index:6" viewBox="0 0 24 24" fill="none" stroke="#374151" stroke-width="2" stroke-linecap="round" stroke-linejoin="round"><path d="M11 18H3"/><path d="m15 18 2 2 4-4"/><path d="M16 12H3"/><path d="M16 6H3"/></svg>
<svg style="position:absolute;left:390.64px;top:566.49px;width:27.64px;height:27.64px;z-index:6" viewBox="0 0 24 24" fill="none" stroke="#374151" stroke-width="2" stroke-linecap="round" stroke-linejoin="round"><path d="m6 9 6 6 6-6"/></svg>
<svg style="position:absolute;left:42.80px;top:626.85px;width:28.72px;height:28.72px;z-index:6" viewBox="0 0 24 24" fill="none" stroke="#374151" stroke-width="2" stroke-linecap="round" stroke-linejoin="round"><path d="M13 21h8"/><path d="M21.174 6.812a1 1 0 0 0-3.986-3.987L3.842 16.174a2 2 0 0 0-.5.83l-1.321 4.352a.5.5 0 0 0 .623.622l4.353-1.32a2 2 0 0 0 .83-.497z"/></svg>
<svg style="position:absolute;left:390.64px;top:628.29px;width:27.64px;height:27.64px;z-index:6" viewBox="0 0 24 24" fill="none" stroke="#374151" stroke-width="2" stroke-linecap="round" stroke-linejoin="round"><path d="m6 9 6 6 6-6"/></svg>
<svg style="position:absolute;left:41.60px;top:689.60px;width:28.80px;height:28.80px;z-index:6" viewBox="0 0 24 24" fill="none" stroke="#374151" stroke-width="2" stroke-linecap="round" stroke-linejoin="round"><circle cx="18" cy="18" r="3"/><circle cx="6" cy="6" r="3"/><path d="M13 6h3a2 2 0 0 1 2 2v7"/><path d="M11 18H8a2 2 0 0 1-2-2V9"/></svg>
<svg style="position:absolute;left:390.64px;top:689.29px;width:27.64px;height:27.64px;z-index:6" viewBox="0 0 24 24" fill="none" stroke="#374151" stroke-width="2" stroke-linecap="round" stroke-linejoin="round"><path d="m6 9 6 6 6-6"/></svg>
<svg style="position:absolute;left:382.85px;top:786.49px;width:28.54px;height:28.54px;z-index:6" viewBox="0 0 24 24" fill="none" stroke="#6b7280" stroke-width="2" stroke-linecap="round" stroke-linejoin="round"><path d="m6 9 6 6 6-6"/></svg>
<svg style="position:absolute;left:42.89px;top:842.69px;width:26.67px;height:26.67px;z-index:6" viewBox="0 0 24 24" fill="none" stroke="#374151" stroke-width="2" stroke-linecap="round" stroke-linejoin="round"><path d="M18 8c0 3.613-3.869 7.429-5.393 8.795a1 1 0 0 1-1.214 0C9.87 15.429 6 11.613 6 8a6 6 0 0 1 12 0"/><circle cx="12" cy="8" r="2"/><path d="M8.714 14h-3.71a1 1 0 0 0-.948.683l-2.004 6A1 1 0 0 0 3 22h18a1 1 0 0 0 .948-1.316l-2-6a1 1 0 0 0-.949-.684h-3.712"/></svg>
<svg style="position:absolute;left:42.18px;top:903.84px;width:27.81px;height:27.81px;z-index:6" viewBox="0 0 24 24" fill="none" stroke="#374151" stroke-width="2" stroke-linecap="round" stroke-linejoin="round"><path d="m21 17-2.156-1.868A.5.5 0 0 0 18 15.5v.5a1 1 0 0 1-1 1h-2a1 1 0 0 1-1-1c0-2.545-3.991-3.97-8.5-4a1 1 0 0 0 0 5c4.153 0 4.745-11.295 5.708-13.5a2.5 2.5 0 1 1 3.31 3.284"/><path d="M3 21h18"/></svg>
<svg style="position:absolute;left:390.64px;top:904.69px;width:27.64px;height:27.64px;z-index:6" viewBox="0 0 24 24" fill="none" stroke="#374151" stroke-width="2" stroke-linecap="round" stroke-linejoin="round"><path d="m6 9 6 6 6-6"/></svg>
<svg style="position:absolute;left:41.94px;top:965.81px;width:28.52px;height:28.52px;z-index:6" viewBox="0 0 24 24" fill="none" stroke="#374151" stroke-width="2" stroke-linecap="round" stroke-linejoin="round"><rect width="8" height="4" x="8" y="2" rx="1" ry="1"/><path d="M16 4h2a2 2 0 0 1 2 2v14a2 2 0 0 1-2 2H6a2 2 0 0 1-2-2V6a2 2 0 0 1 2-2h2"/><path d="M12 11h4"/><path d="M12 16h4"/><path d="M8 11h.01"/><path d="M8 16h.01"/></svg>
<svg style="position:absolute;left:42.05px;top:1028.85px;width:27.64px;height:27.64px;z-index:6" viewBox="0 0 24 24" fill="none" stroke="#374151" stroke-width="2" stroke-linecap="round" stroke-linejoin="round"><path d="M20 13c0 5-3.5 7.5-7.66 8.95a1 1 0 0 1-.67-.01C7.5 20.5 4 18 4 13V6a1 1 0 0 1 1-1c2 0 4.5-1.2 6.24-2.72a1.17 1.17 0 0 1 1.52 0C14.51 3.81 17 5 19 5a1 1 0 0 1 1 1z"/><path d="m9 12 2 2 4-4"/></svg>
<svg style="position:absolute;left:390.64px;top:1028.29px;width:27.64px;height:27.64px;z-index:6" viewBox="0 0 24 24" fill="none" stroke="#374151" stroke-width="2" stroke-linecap="round" stroke-linejoin="round"><path d="m6 9 6 6 6-6"/></svg>
<svg style="position:absolute;left:42.94px;top:1092.94px;width:25.47px;height:25.47px;z-index:6" viewBox="0 0 24 24" fill="none" stroke="#374151" stroke-width="2" stroke-linecap="round" stroke-linejoin="round"><path d="m12 14 4-4"/><path d="M3.34 19a10 10 0 1 1 17.32 0"/></svg>
<svg style="position:absolute;left:390.64px;top:1089.89px;width:27.64px;height:27.64px;z-index:6" viewBox="0 0 24 24" fill="none" stroke="#374151" stroke-width="2" stroke-linecap="round" stroke-linejoin="round"><path d="m6 9 6 6 6-6"/></svg>
<svg style="position:absolute;left:42.86px;top:1152.73px;width:27.27px;height:27.27px;z-index:6" viewBox="0 0 24 24" fill="none" stroke="#374151" stroke-width="2" stroke-linecap="round" stroke-linejoin="round"><path d="m16 16 3-8 3 8c-.87.65-1.92 1-3 1s-2.13-.35-3-1Z"/><path d="m2 16 3-8 3 8c-.87.65-1.92 1-3 1s-2.13-.35-3-1Z"/><path d="M7 21h10"/><path d="M12 3v18"/><path d="M3 7h2c2 0 5-1 7-2 2 1 5 2 7 2h2"/></svg>
<svg style="position:absolute;left:390.64px;top:1153.09px;width:27.64px;height:27.64px;z-index:6" viewBox="0 0 24 24" fill="none" stroke="#374151" stroke-width="2" stroke-linecap="round" stroke-linejoin="round"><path d="m6 9 6 6 6-6"/></svg>
<svg style="position:absolute;left:42.34px;top:1214.55px;width:27.66px;height:27.66px;z-index:6" viewBox="0 0 24 24" fill="none" stroke="#111827" stroke-width="2" stroke-linecap="round" stroke-linejoin="round"><path d="M4 2v20l2-1 2 1 2-1 2 1 2-1 2 1 2-1 2 1V2l-2 1-2-1-2 1-2-1-2 1-2-1-2 1Z"/><path d="M14 8H8"/><path d="M16 12H8"/><path d="M13 16H8"/></svg>
<svg style="position:absolute;left:42.32px;top:1277.72px;width:27.30px;height:27.30px;z-index:6" viewBox="0 0 24 24" fill="none" stroke="#374151" stroke-width="2" stroke-linecap="round" stroke-linejoin="round"><rect width="18" height="18" x="3" y="3" rx="2"/><path d="M12 9v6"/><path d="M16 15v6"/><path d="M16 3v6"/><path d="M3 15h18"/><path d="M3 9h18"/><path d="M8 15v6"/><path d="M8 3v6"/></svg>
<svg style="position:absolute;left:41.73px;top:1350.43px;width:27.18px;height:27.18px;z-index:6" viewBox="0 0 24 24" fill="none" stroke="#fff" stroke-width="2" stroke-linecap="round" stroke-linejoin="round"><rect width="7" height="7" x="3" y="3" rx="1"/><rect width="7" height="7" x="14" y="3" rx="1"/><rect width="7" height="7" x="14" y="14" rx="1"/><rect width="7" height="7" x="3" y="14" rx="1"/></svg>
<svg style="position:absolute;left:42px;top:1419px;width:54px;height:54px;z-index:6" viewBox="0 0 54 54">
<defs><clipPath id="av"><rect width="54" height="54" rx="13"/></clipPath></defs>
<g clip-path="url(#av)">
<rect width="54" height="54" fill="#e3e2d7"/>
<rect x="0" y="13" width="15" height="16" fill="#a7b4bb"/>
<rect x="0" y="29" width="15" height="25" fill="#eceeed"/>
<rect x="40" y="12" width="14" height="32" fill="#d2d9d6"/>
<rect x="44" y="36" width="10" height="10" fill="#b9cbb4"/>
<path d="M14 46 C12 30 14 17 20 10 C25 4 36 4 40 10 C45 17 44 32 46 46 Z" fill="#8b6e53"/>
<rect x="22" y="31" width="11" height="11" fill="#cf9f80"/>
<ellipse cx="28" cy="23.5" rx="9.2" ry="12" fill="#dcad8c"/>
<path d="M19 38 L34 38 L32 54 L22 54 Z" fill="#ece3d3"/>
<path d="M3 54 C4 46 9 42 20 38 L23 54 Z" fill="#131a2b"/>
<path d="M33 38 C45 42 51 46 52 54 L31 54 Z" fill="#131a2b"/>
</g></svg>
<svg style="position:absolute;left:395px;top:1434px;width:12px;height:25px;z-index:6" viewBox="0 0 12 25"><circle cx="6" cy="3.5" r="2.6" fill="#374151"/><circle cx="6" cy="12.5" r="2.6" fill="#374151"/><circle cx="6" cy="21.5" r="2.6" fill="#374151"/></svg>
<svg style="position:absolute;left:502.66px;top:43.66px;width:22.08px;height:22.08px;z-index:6" viewBox="0 0 24 24" fill="none" stroke="#0a0a0a" stroke-width="2.4" stroke-linecap="round" stroke-linejoin="round"><rect width="18" height="18" x="3" y="3" rx="2"/><path d="M9 3v18"/></svg>
<svg style="position:absolute;left:672.64px;top:42.28px;width:25.07px;height:25.07px;z-index:6" viewBox="0 0 24 24" fill="none" stroke="#6b7280" stroke-width="2.2" stroke-linecap="round" stroke-linejoin="round"><path d="m9 18 6-6-6-6"/></svg>
<svg style="position:absolute;left:2415.67px;top:40.84px;width:27.92px;height:27.92px;z-index:6" viewBox="0 0 24 24" fill="none" stroke="#0a0a0a" stroke-width="2.2" stroke-linecap="round" stroke-linejoin="round"><path d="M21 10V8a2 2 0 0 0-1-1.73l-7-4a2 2 0 0 0-2 0l-7 4A2 2 0 0 0 3 8v8a2 2 0 0 0 1 1.73l7 4a2 2 0 0 0 2 0l2-1.14"/><path d="m7.5 4.27 9 5.15"/><polyline points="3.29 7 12 12 20.71 7"/><line x1="12" x2="12" y1="22" y2="12"/><circle cx="18.5" cy="15.5" r="2.5"/><path d="M20.27 17.27 22 19"/></svg>
<svg style="position:absolute;left:2491.71px;top:40.86px;width:27.44px;height:27.44px;z-index:6" viewBox="0 0 24 24" fill="none" stroke="#0a0a0a" stroke-width="2.2" stroke-linecap="round" stroke-linejoin="round"><path d="M6 8a6 6 0 0 1 12 0c0 7 3 9 3 9H3s3-2 3-9"/><path d="M10.3 21a1.94 1.94 0 0 0 3.4 0"/></svg>
<svg style="position:absolute;left:755.94px;top:131.85px;width:27.64px;height:27.64px;z-index:6" viewBox="0 0 24 24" fill="none" stroke="#0a0a0a" stroke-width="2" stroke-linecap="round" stroke-linejoin="round"><path d="M15 2H6a2 2 0 0 0-2 2v16a2 2 0 0 0 2 2h12a2 2 0 0 0 2-2V7Z"/><path d="M14 2v4a2 2 0 0 0 2 2h4"/><path d="M9 15h6"/><path d="M12 18v-6"/></svg>
<svg style="position:absolute;left:821.58px;top:236.84px;width:27.74px;height:27.74px;z-index:6" viewBox="0 0 24 24" fill="none" stroke="#0a0a0a" stroke-width="2.1" stroke-linecap="round" stroke-linejoin="round"><path d="M12 17v5"/><path d="M9 10.76a2 2 0 0 1-1.11 1.79l-1.78.9A2 2 0 0 0 5 15.24V16a1 1 0 0 0 1 1h12a1 1 0 0 0 1-1v-.76a2 2 0 0 0-1.11-1.79l-1.78-.9A2 2 0 0 1 15 10.76V7a1 1 0 0 1 1-1 2 2 0 0 0 0-4H8a2 2 0 0 0 0 4 1 1 0 0 1 1 1z"/></svg>
<svg style="position:absolute;left:821.58px;top:403.74px;width:27.74px;height:27.74px;z-index:6" viewBox="0 0 24 24" fill="none" stroke="#0a0a0a" stroke-width="2.1" stroke-linecap="round" stroke-linejoin="round"><path d="M12 17v5"/><path d="M9 10.76a2 2 0 0 1-1.11 1.79l-1.78.9A2 2 0 0 0 5 15.24V16a1 1 0 0 0 1 1h12a1 1 0 0 0 1-1v-.76a2 2 0 0 0-1.11-1.79l-1.78-.9A2 2 0 0 1 15 10.76V7a1 1 0 0 1 1-1 2 2 0 0 0 0-4H8a2 2 0 0 0 0 4 1 1 0 0 1 1 1z"/></svg>
<svg style="position:absolute;left:952.51px;top:139.41px;width:27.48px;height:27.48px;z-index:6" viewBox="0 0 24 24" fill="none" stroke="#0a0a0a" stroke-width="2.2" stroke-linecap="round" stroke-linejoin="round"><rect width="18" height="18" x="3" y="3" rx="2"/><path d="M9 3v18"/><path d="m16 15-3-3 3-3"/></svg>
<svg style="position:absolute;left:1885.56px;top:332.59px;width:29.07px;height:29.07px;z-index:6" viewBox="0 0 24 24" fill="none" stroke="#0a0a0a" stroke-width="2.1" stroke-linecap="round" stroke-linejoin="round"><path d="M12 17v5"/><path d="M9 10.76a2 2 0 0 1-1.11 1.79l-1.78.9A2 2 0 0 0 5 15.24V16a1 1 0 0 0 1 1h12a1 1 0 0 0 1-1v-.76a2 2 0 0 0-1.11-1.79l-1.78-.9A2 2 0 0 1 15 10.76V7a1 1 0 0 1 1-1 2 2 0 0 0 0-4H8a2 2 0 0 0 0 4 1 1 0 0 1 1 1z"/></svg>
<svg style="position:absolute;left:2134.24px;top:332.72px;width:25.87px;height:25.87px;z-index:6" viewBox="0 0 24 24" fill="none" stroke="#0a0a0a" stroke-width="2.1" stroke-linecap="round" stroke-linejoin="round"><path d="M3 6h18"/><path d="M19 6v14c0 1-1 2-2 2H7c-1 0-2-1-2-2V6"/><path d="M8 6V4c0-1 1-2 2-2h4c1 0 2 1 2 2v2"/><line x1="10" x2="10" y1="11" y2="17"/><line x1="14" x2="14" y1="11" y2="17"/></svg>
<svg style="position:absolute;left:2307.94px;top:331.54px;width:27.18px;height:27.18px;z-index:6" viewBox="0 0 24 24" fill="none" stroke="#0a0a0a" stroke-width="2.1" stroke-linecap="round" stroke-linejoin="round"><path d="M21 15v4a2 2 0 0 1-2 2H5a2 2 0 0 1-2-2v-4"/><polyline points="7 10 12 15 17 10"/><line x1="12" x2="12" y1="15" y2="3"/></svg>
<svg style="position:absolute;left:1011.39px;top:604.83px;width:26.91px;height:26.91px;z-index:6" viewBox="0 0 24 24" fill="none" stroke="#6b7280" stroke-width="2.2" stroke-linecap="round" stroke-linejoin="round"><path d="m6 9 6 6 6-6"/></svg>
<svg style="position:absolute;left:1010.43px;top:1194.41px;width:27.81px;height:27.81px;z-index:6" viewBox="0 0 24 24" fill="none" stroke="#6b7280" stroke-width="2.2" stroke-linecap="round" stroke-linejoin="round"><path d="m9 18 6-6-6-6"/></svg>
<svg style="position:absolute;left:1010.43px;top:1299.21px;width:27.81px;height:27.81px;z-index:6" viewBox="0 0 24 24" fill="none" stroke="#6b7280" stroke-width="2.2" stroke-linecap="round" stroke-linejoin="round"><path d="m9 18 6-6-6-6"/></svg>
<svg style="position:absolute;left:1010.43px;top:1403.71px;width:27.81px;height:27.81px;z-index:6" viewBox="0 0 24 24" fill="none" stroke="#6b7280" stroke-width="2.2" stroke-linecap="round" stroke-linejoin="round"><path d="m9 18 6-6-6-6"/></svg>
</body></html>
